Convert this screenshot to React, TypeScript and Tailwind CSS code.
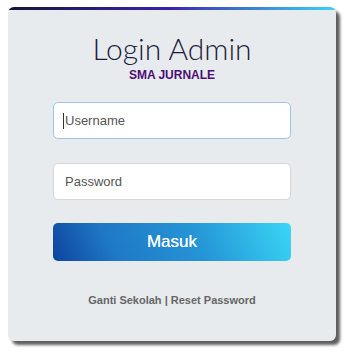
export default function App() {
  return (
    <div className="w-[350px] min-h-[360px] bg-white pt-[7px] pl-[8px] font-['Liberation_Sans',Arial,sans-serif]">
      <div className="flex h-[334px] w-[328px] flex-col overflow-hidden rounded-md bg-[#e8ebed] shadow-[4px_4px_3px_rgba(40,40,40,0.75)]">
        <div className="h-[3px] bg-linear-to-r from-[#15143a] via-[#3a21b5] to-[#38d4f2]" />
        <h1 className="mt-[23px] text-center font-['Lato',sans-serif] text-[30px] font-light leading-none text-[#1c1c3a]">
          Login Admin
        </h1>
        <p className="mt-[6px] text-center text-[12px] font-bold leading-none text-[#4b0e78]">
          SMA JURNALE
        </p>
        <div className="mt-[21px] flex flex-col px-[45px]">
          <div className="relative">
            <input
              type="text"
              placeholder="Username"
              className="h-[37px] w-full rounded-[5px] border border-[#a3c4e6] bg-white pl-[11px] text-[13px] text-[#444] outline-none placeholder:text-[#555]"
            />
            <span className="absolute left-[10px] top-[11px] h-[16px] w-px bg-[#333]" />
          </div>
          <input
            type="password"
            placeholder="Password"
            className="mt-[24px] h-[37px] w-full rounded-[5px] border border-[#d6d9db] bg-white pl-[11px] text-[13px] text-[#444] outline-none placeholder:text-[#555]"
          />
          <button className="mt-[23px] h-[38px] w-full rounded-[5px] bg-[linear-gradient(65deg,#0d449e_0%,#1f78c6_25%,#2595d6_60%,#3ad6f5_100%)] text-[17px] font-normal text-white [text-shadow:0_0_0.4px_#fff]">
            Masuk
          </button>
        </div>
        <p className="mt-[31px] text-center text-[11px] font-bold text-[#666]">
          Ganti Sekolah | Reset Password
        </p>
      </div>
    </div>
  );
}
